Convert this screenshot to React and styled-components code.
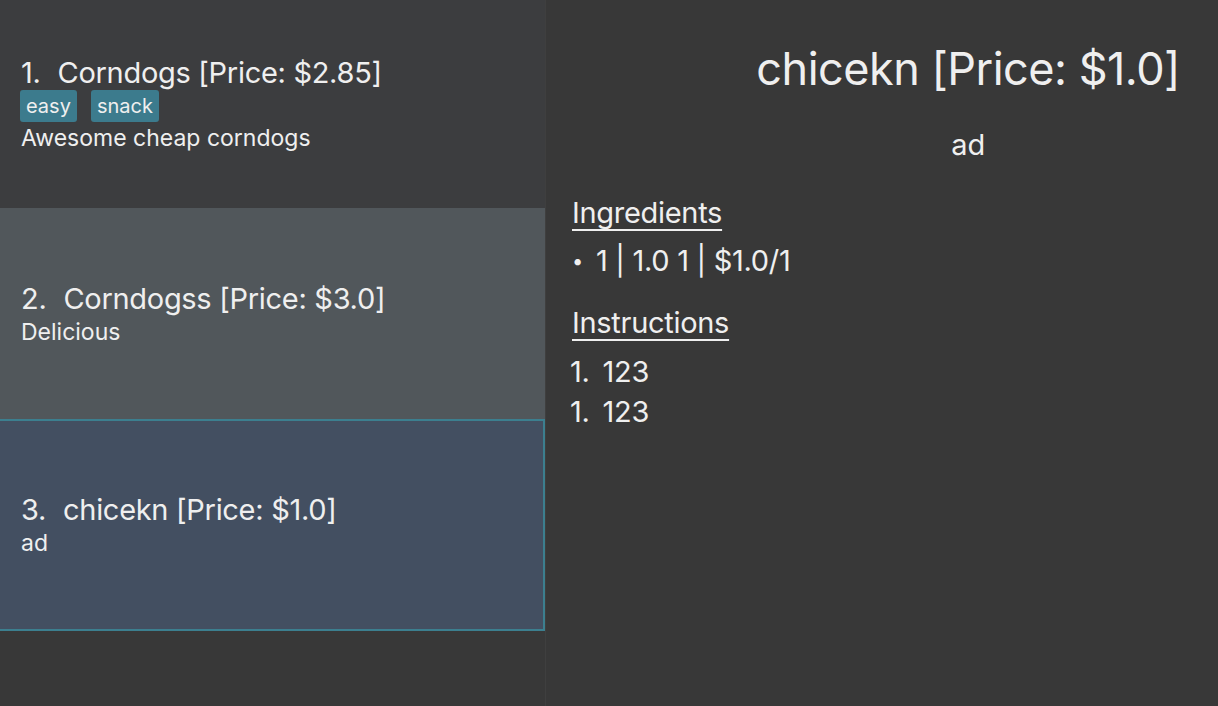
import React from 'react';
import styled, { createGlobalStyle } from 'styled-components';

const GlobalStyle = createGlobalStyle`
  html, body {
    margin: 0;
    padding: 0;
    background: #383838;
    font-family: Inter, "Noto Sans", sans-serif;
    color: #efefef;
  }
`;

const Page = styled.main`
  display: flex;
  width: 1218px;
  height: 706px;
  background: #383838;
  overflow: hidden;
`;

const RecipeList = styled.section`
  width: 545px;
  display: flex;
  flex-direction: column;
  border-right: 1px solid #3f3f3f;
`;

const RecipeCard = styled.article`
  height: ${(p) => p.height}px;
  box-sizing: border-box;
  display: flex;
  flex-direction: column;
  justify-content: center;
  padding: 0 21px;
  background: ${(p) => (p.selected ? '#434f61' : p.alt ? '#51575b' : '#3c3d3f')};
  border: ${(p) => (p.selected ? '2px solid #3c7f8f' : 'none')};
  border-left: none;
`;

const CardTitle = styled.h2`
  margin: 0;
  font-weight: 400;
  font-size: 29px;
  line-height: 36px;
  letter-spacing: -0.3px;
  display: flex;
  gap: 17px;
`;

const TagRow = styled.div`
  display: flex;
  gap: 14px;
  margin: -1px 0 1px -1px;
`;

const Tag = styled.span`
  background: #3c7b8d;
  border-radius: 3px;
  padding: 0 6px;
  height: 32px;
  font-size: 20px;
  line-height: 32px;
`;

const CardDesc = styled.p`
  margin: 0;
  font-size: 23px;
  line-height: 30px;
  letter-spacing: 0;
`;

const Detail = styled.section`
  flex: 1;
  display: flex;
  flex-direction: column;
  padding: 40px 38px 0 26px;
`;

const Header = styled.header`
  align-self: flex-end;
  display: flex;
  flex-direction: column;
  align-items: center;
`;

const DetailTitle = styled.h1`
  margin: 0;
  font-weight: 400;
  font-size: 45px;
  line-height: 58px;
  letter-spacing: -0.5px;
`;

const DetailDesc = styled.p`
  margin: 29px 0 0;
  font-size: 29px;
  line-height: 36px;
`;

const SectionHeading = styled.h3`
  margin: ${(p) => p.top}px 0 0;
  font-weight: 400;
  font-size: 29px;
  line-height: 40px;
  letter-spacing: -0.3px;
  text-decoration: underline;
  text-underline-offset: 6px;
  text-decoration-thickness: 2px;
`;

const Bullets = styled.ul`
  list-style: none;
  margin: 8px 0 0;
  padding: 0;
`;

const Bullet = styled.li`
  font-size: 29px;
  line-height: 40px;
  letter-spacing: -0.3px;
  display: flex;
  gap: 13px;
  &::before {
    content: '•';
    font-size: 20px;
  }
`;

const Steps = styled.ol`
  list-style: none;
  margin: 9px 0 0 -2px;
  padding: 0;
`;

const Step = styled.li`
  font-size: 29px;
  line-height: 40px;
  letter-spacing: -0.3px;
  display: flex;
  gap: 13px;
`;

const recipes = [
  { name: 'Corndogs', price: '2.85', tags: ['easy', 'snack'], desc: 'Awesome cheap corndogs', height: 208 },
  { name: 'Corndogss', price: '3.0', tags: [], desc: 'Delicious', height: 211, alt: true },
  { name: 'chicekn', price: '1.0', tags: [], desc: 'ad', height: 212, selected: true },
];

export default function App() {
  return (
    <Page>
      <GlobalStyle />
      <RecipeList>
        {recipes.map((r, i) => (
          <RecipeCard key={r.name} height={r.height} alt={r.alt} selected={r.selected}>
            <CardTitle>
              <span>{i + 1}.</span>
              <span>{r.name} [Price: ${r.price}]</span>
            </CardTitle>
            {r.tags.length > 0 && (
              <TagRow>
                {r.tags.map((t) => <Tag key={t}>{t}</Tag>)}
              </TagRow>
            )}
            <CardDesc>{r.desc}</CardDesc>
          </RecipeCard>
        ))}
      </RecipeList>
      <Detail>
        <Header>
          <DetailTitle>chicekn [Price: $1.0]</DetailTitle>
          <DetailDesc>ad</DetailDesc>
        </Header>
        <SectionHeading top={30}>Ingredients</SectionHeading>
        <Bullets>
          <Bullet>1 | 1.0 1 | $1.0/1</Bullet>
        </Bullets>
        <SectionHeading top={22}>Instructions</SectionHeading>
        <Steps>
          <Step><span>1.</span><span>123</span></Step>
          <Step><span>1.</span><span>123</span></Step>
        </Steps>
      </Detail>
    </Page>
  );
}
